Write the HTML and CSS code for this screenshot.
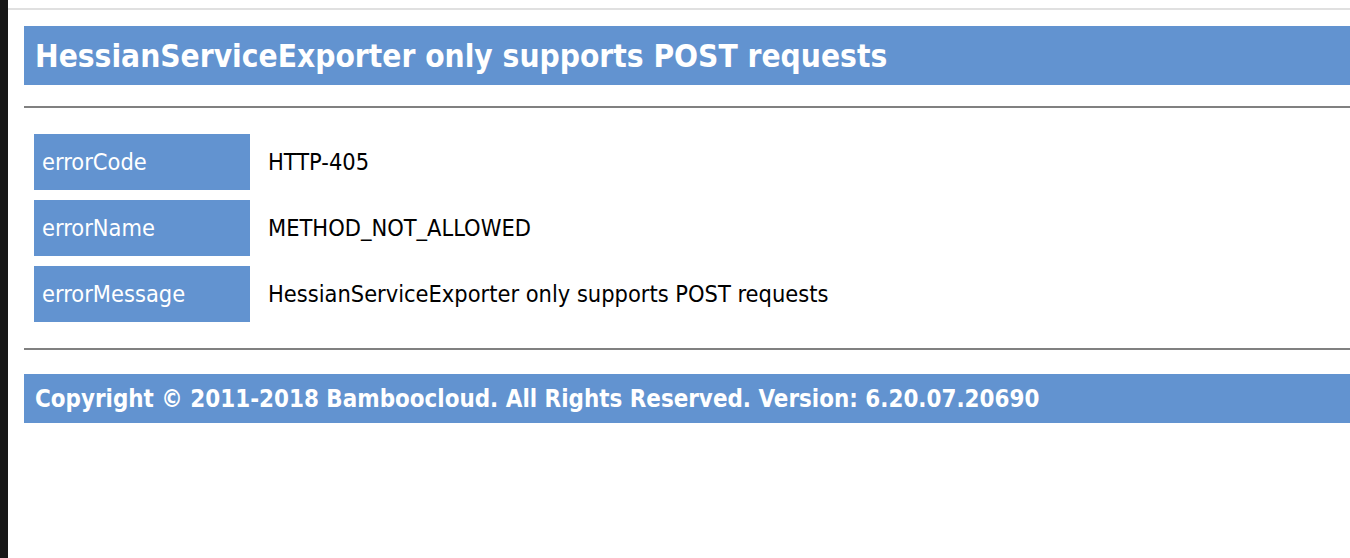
FILE: index.html
```html
<!DOCTYPE html>
<html>
<head>
<meta charset="utf-8">
<title>Error</title>
<link rel="stylesheet" href="styles.css">
</head>
<body>
<div class="strip"></div>
<div class="page">
  <div class="topline"></div>
  <div class="content">
    <h1 class="title">HessianServiceExporter only supports POST requests</h1>
    <hr class="rule">
    <div class="details">
      <div class="label">errorCode</div>
      <div class="value">HTTP-405</div>
      <div class="label">errorName</div>
      <div class="value">METHOD_NOT_ALLOWED</div>
      <div class="label">errorMessage</div>
      <div class="value">HessianServiceExporter only supports POST requests</div>
    </div>
    <hr class="rule rule-bottom">
    <div class="footer">Copyright © 2011-2018 Bamboocloud. All Rights Reserved. Version: 6.20.07.20690</div>
  </div>
</div>
</body>
</html>
```
FILE: styles.css
```css
html, body {
  margin: 0;
  padding: 0;
  height: 100%;
  background: #ffffff;
}
body {
  display: flex;
  font-family: "DejaVu Sans Condensed", "DejaVu Sans", sans-serif;
  font-stretch: condensed;
}
.strip {
  width: 8px;
  flex: 0 0 8px;
  background: #171717;
}
.page {
  flex: 1;
  padding-top: 8px;
}
.topline {
  height: 2px;
  background: #e0e0e0;
}
.content {
  padding: 16px 0 0 16px;
}
.title {
  margin: 0;
  height: 59px;
  line-height: 61px;
  padding-left: 11px;
  background: #6293d0;
  color: #ffffff;
  font-size: 31.4px;
  font-weight: bold;
  white-space: nowrap;
}
.rule {
  margin: 21px 0 0;
  border: 0;
  height: 2px;
  background: #808080;
}
.rule-bottom {
  margin-top: 16px;
}
.details {
  margin-top: 16px;
  padding: 10px;
  display: grid;
  grid-template-columns: 216px 1fr;
  grid-auto-rows: 56px;
  gap: 10px;
}
.label {
  background: #6293d0;
  color: #ffffff;
  padding-left: 8px;
  display: flex;
  align-items: center;
  font-size: 23.4px;
}
.value {
  margin-left: -10px;
  padding-left: 18px;
  display: flex;
  align-items: center;
  color: #000000;
  font-size: 23.4px;
}
.footer {
  margin-top: 24px;
  height: 49px;
  line-height: 51px;
  padding-left: 11px;
  background: #6293d0;
  color: #ffffff;
  font-size: 23.9px;
  font-weight: bold;
  white-space: nowrap;
}
```
